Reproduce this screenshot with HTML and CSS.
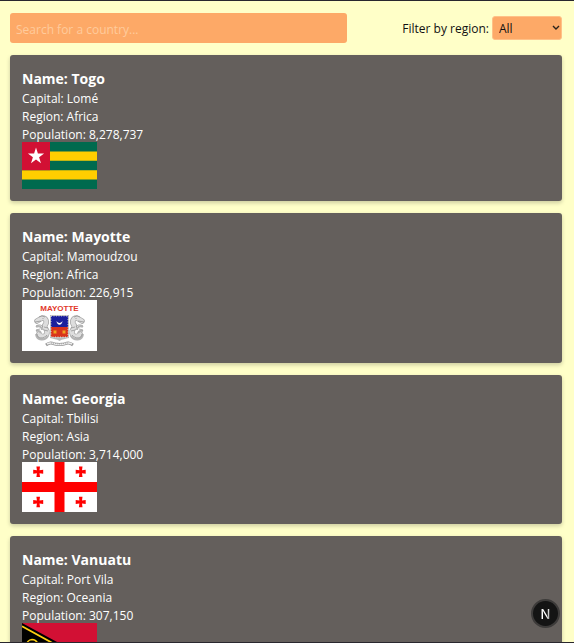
FILE: index.html
```html
<!DOCTYPE html>
<html lang="en">
<head>
<meta charset="utf-8">
<meta name="viewport" content="width=device-width, initial-scale=1">
<title>Countries</title>
<link rel="stylesheet" href="styles.css">
</head>
<body>
<main class="page">
  <header class="toolbar">
    <input class="search" type="text" placeholder="Search for a country..." aria-label="Search for a country">
    <div class="filter">
      <label for="region">Filter by region:</label>
      <div class="picker">
        <select class="region" id="region">
          <option>All</option>
          <option>Africa</option>
          <option>Asia</option>
          <option>Oceania</option>
        </select>
        <svg class="chevron" viewBox="0 0 8 6" aria-hidden="true"><path d="M1 1l3 3 3-3" fill="none" stroke="#2b211a" stroke-width="1.4"/></svg>
      </div>
    </div>
  </header>
  <section class="card">
    <h2>Name: Togo</h2>
    <p>Capital: Lomé</p>
    <p>Region: Africa</p>
    <p>Population: 8,278,737</p>
    <svg class="flag togo" viewBox="0 0 75 47" preserveAspectRatio="none" role="img" aria-label="Flag of Togo">
      <path fill="#006a4e" d="M0 0h75v47H0z"/>
      <path fill="#ffce00" d="M0 9.4h75v9.4H0zM0 28.2h75v9.4H0z"/>
      <path fill="#d21034" d="M0 0h28v28.2H0z"/>
      <path fill="#fff" d="M14 5.5l1.9 6h6.2l-5 3.7 1.9 6-5-3.7-5 3.7 1.9-6-5-3.7h6.2z"/>
    </svg>
  </section>
  <section class="card">
    <h2>Name: Mayotte</h2>
    <p>Capital: Mamoudzou</p>
    <p>Region: Africa</p>
    <p>Population: 226,915</p>
    <svg class="flag mayotte" viewBox="0 0 75 51" role="img" aria-label="Flag of Mayotte">
      <path fill="#fff" d="M0 0h75v51H0z"/>
      <text class="motto" x="37.5" y="11" text-anchor="middle">MAYOTTE</text>
      <path fill="#b9b9b9" d="M28 15h19v23c-3 1-7 1-9.500 3c-2.500-2-6.500-2-9.500-3z"/>
      <path fill="#1b1f9c" d="M29 16h17v11H29z"/>
      <path fill="#d7341c" d="M29 27h17v10H29z"/>
      <path fill="none" stroke="#fff" stroke-dasharray="1 1.500" stroke-width=".7" d="M29 16h17v21H29z"/>
      <path fill="#fff" d="M34.500 21c.5 5 5.500 5 6 0c-1.500 2.500-4.500 2.500-6 0z"/>
      <path stroke="#f5b321" stroke-width=".9" d="M33 30v4M31.300 31l3.400 2M34.700 31l-3.400 2M42 30v4M40.300 31l3.400 2M43.700 31l-3.400 2"/>
      <g id="seahorse">
        <path fill="none" stroke="#a5a5a5" stroke-width="5.500" stroke-linecap="round" stroke-linejoin="round" d="M15 21l5-3c5 0 5 5 3 7c-2 3 3 4 2 8c-1 5-7 4-8 1"/>
        <path fill="none" stroke="#dedede" stroke-width="4" stroke-linecap="round" stroke-linejoin="round" d="M15 21l5-3c5 0 5 5 3 7c-2 3 3 4 2 8c-1 5-7 4-8 1"/>
        <path fill="none" stroke="#b5b5b5" stroke-width="2" d="M14 27c3-2 6 0 6 3M14 31c3-1 4 0 5 2M14 34c1 7 9 7 12 2"/>
        <path fill="none" stroke="#8c8c8c" stroke-width=".7" d="M17 17l3-1 3 1M13 22l6-1M14 26c3-2 6-1 7 1M14 30l4-1M15 34c0 5 7 5 10 1M21 18v1M22 27l4 1M22 30l4 1"/>
      </g>
      <use href="#seahorse" transform="matrix(-1 0 0 1 75 0)"/>
      <path fill="none" stroke="#999" stroke-width="3" d="M24 45c4-3 6-2 9-1q4.500 1 9 0c3-1 5-2 9 1"/>
      <path fill="none" stroke="#eee" stroke-width="1.600" d="M25 44c4-2 5-1 8 0q4.500 1 9 0c3-1 4-2 8 0"/>
      <path fill="none" stroke="#888" stroke-width=".7" stroke-dasharray="1 1" d="M29 43c3 0 4 1 8.500 1s5.500-1 8.500-1"/>
    </svg>
  </section>
  <section class="card">
    <h2>Name: Georgia</h2>
    <p>Capital: Tbilisi</p>
    <p>Region: Asia</p>
    <p>Population: 3,714,000</p>
    <svg class="flag georgia" viewBox="0 0 75 50" role="img" aria-label="Flag of Georgia">
      <path fill="#fff" d="M0 0h75v50H0z"/>
      <path fill="#f00" d="M32.500 0h10v50h-10zM0 20h75v10H0z"/>
      <g fill="#f00">
        <path id="cross" d="M14.400 4.500h3.600l-.5 3.700 3.700-.5v4.100l-3.700-.5.5 3.700h-3.600l.5-3.700-3.700.5V7.700l3.700.5z"/>
        <use href="#cross" x="42.500"/>
        <use href="#cross" y="30.200"/>
        <use href="#cross" x="42.500" y="30.200"/>
      </g>
    </svg>
  </section>
  <section class="card">
    <h2>Name: Vanuatu</h2>
    <p>Capital: Port Vila</p>
    <p>Region: Oceania</p>
    <p>Population: 307,150</p>
    <svg class="flag vanuatu" viewBox="0 0 75 45" role="img" aria-label="Flag of Vanuatu">
      <path fill="#009543" d="M0 0h75v45H0z"/>
      <path fill="#d21034" d="M0 0h75v22.500H0z"/>
      <path fill="#000" d="M0 0l36 19.500h39v6H36L0 45z"/>
      <path fill="none" stroke="#fdce12" stroke-width="1.800" d="M0 3.200l35 19.300h40M0 41.800l35-19.300"/>
      <path fill="none" stroke="#fdce12" stroke-width="1.600" d="M12 29c6-3 5-12-2-12.500c-7 .5-7 11 0 11c5 0 5-6 1-6"/>
    </svg>
  </section>
</main>
<button class="badge" type="button" aria-label="Open developer tools"><span>N</span></button>
</body>
</html>
```
FILE: styles.css
```css
* {
  box-sizing: border-box;
}

body {
  margin: 0;
  height: 100vh;
  overflow: hidden;
  border-top: 1px solid #29272e;
  border-bottom: 1px solid #29272e;
  background: #ffffc8;
  color: #111;
  font: 12px/18px "Open Sans", "Noto Sans", sans-serif;
}

.page {
  height: 100%;
  overflow: hidden;
  padding: 12px 12px 0 10px;
}

.toolbar {
  display: flex;
  align-items: center;
  justify-content: space-between;
  margin-bottom: 12px;
}

.search {
  flex: 0 1 61%;
  min-width: 0;
  height: 30px;
  padding: 2px 6px 0;
  border: 0;
  border-radius: 3px;
  background: #fda967;
  color: #222;
  font: inherit;
}

.search::placeholder {
  color: #ffcb9c;
  opacity: 1;
}

.filter {
  display: flex;
  align-items: center;
  gap: 3px;
}

.filter label {
  padding-top: 2px;
}

.picker {
  position: relative;
}

.region {
  display: block;
  width: 70px;
  height: 24px;
  padding: 2px 6px 0;
  border: 1px solid #ffc187;
  border-radius: 3px;
  appearance: none;
  background: #fda967;
  color: #111;
  font: inherit;
}

.chevron {
  position: absolute;
  top: 9px;
  right: 2px;
  width: 8px;
  height: 6px;
  pointer-events: none;
}

.card {
  margin-bottom: 12px;
  padding: 13px 12px 12px;
  border-radius: 3px;
  background: #645f5c;
  box-shadow: 0 2px 4px rgb(0 0 0 / 20%);
  color: #fff;
}

.card h2 {
  margin: 0;
  font-size: 14px;
  font-weight: 700;
  line-height: 22px;
}

.card p {
  margin: 0;
}

.flag {
  display: block;
  width: 75px;
  margin-top: -2px;
}

.togo {
  height: 47px;
}

.mayotte {
  height: 51px;
}

.georgia {
  height: 50px;
}

.vanuatu {
  height: 45px;
}

.motto {
  fill: #e2372b;
  font: 700 8px "Liberation Sans", sans-serif;
}

.badge {
  position: fixed;
  right: 14px;
  bottom: 15px;
  display: grid;
  place-items: center;
  width: 29px;
  height: 29px;
  padding: 0;
  border: 2px solid #3d3b3a;
  border-radius: 50%;
  background: #141414;
  font: 500 13px/16px Inter, sans-serif;
}

.badge span {
  background: linear-gradient(100deg, #fff 60%, #777);
  background-clip: text;
  color: transparent;
}
```
